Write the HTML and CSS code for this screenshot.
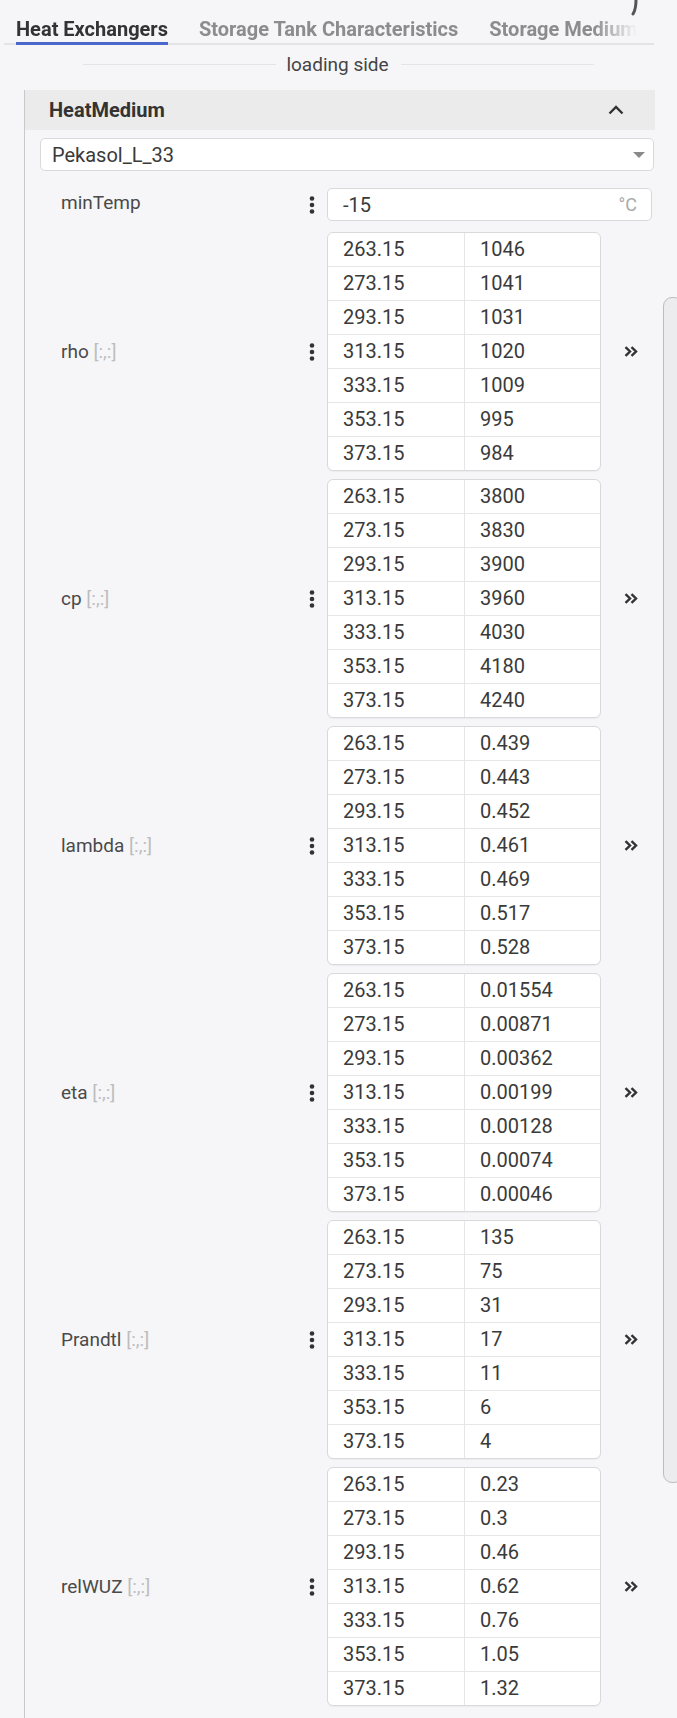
FILE: index.html
```html
<!DOCTYPE html>
<html>
<head>
<meta charset="utf-8">
<link rel="stylesheet" href="styles.css">
</head>
<body>
<svg class="corner-mark" width="8" height="16" viewBox="0 0 8 16"><path d="M5 0 Q5 9 2 14" fill="none" stroke="#555" stroke-width="3" stroke-linecap="round"/></svg>
<div class="tabbar">
  <div class="tab-scroll">
    <div class="tab active">Heat Exchangers</div>
    <div class="tab">Storage Tank Characteristics</div>
    <div class="tab">Storage Medium</div>
  </div>
</div>
<div class="divider"><span class="line"></span><span class="divider-text">loading side</span><span class="line"></span></div>
<div class="panel">
  <div class="panel-header"><span class="panel-title">HeatMedium</span>
    <svg width="16" height="10" viewBox="0 0 16 10"><path d="M1.5 8.5 L8 2 L14.5 8.5" fill="none" stroke="#333" stroke-width="2.4"/></svg>
  </div>
  <div class="select"><span>Pekasol_L_33</span><span class="caret"></span></div>
  <div class="fields">
    <div class="field field-input">
      <div class="field-label">minTemp</div>
      <div class="dots"><svg width="6" height="18" viewBox="0 0 6 18"><circle cx="3" cy="2.5" r="2.3"/><circle cx="3" cy="9" r="2.3"/><circle cx="3" cy="15.5" r="2.3"/></svg></div>
      <div class="input"><span>-15</span><span class="unit">°C</span></div>
    </div>

    <div class="field">
      <div class="field-label">rho <span class="dim">[:,:]</span></div>
      <div class="dots"><svg width="6" height="18" viewBox="0 0 6 18"><circle cx="3" cy="2.5" r="2.3"/><circle cx="3" cy="9" r="2.3"/><circle cx="3" cy="15.5" r="2.3"/></svg></div>
      <div class="table">
        <div class="tr"><div class="td">263.15</div><div class="td">1046</div></div>
        <div class="tr"><div class="td">273.15</div><div class="td">1041</div></div>
        <div class="tr"><div class="td">293.15</div><div class="td">1031</div></div>
        <div class="tr"><div class="td">313.15</div><div class="td">1020</div></div>
        <div class="tr"><div class="td">333.15</div><div class="td">1009</div></div>
        <div class="tr"><div class="td">353.15</div><div class="td">995</div></div>
        <div class="tr"><div class="td">373.15</div><div class="td">984</div></div>
      </div>
      <div class="expand"><svg width="14" height="11" viewBox="0 0 14 11"><path d="M1.5 1.2 L6 5.5 L1.5 9.8 M7.5 1.2 L12 5.5 L7.5 9.8" fill="none" stroke="#333" stroke-width="2.4"/></svg></div>
    </div>

    <div class="field">
      <div class="field-label">cp <span class="dim">[:,:]</span></div>
      <div class="dots"><svg width="6" height="18" viewBox="0 0 6 18"><circle cx="3" cy="2.5" r="2.3"/><circle cx="3" cy="9" r="2.3"/><circle cx="3" cy="15.5" r="2.3"/></svg></div>
      <div class="table">
        <div class="tr"><div class="td">263.15</div><div class="td">3800</div></div>
        <div class="tr"><div class="td">273.15</div><div class="td">3830</div></div>
        <div class="tr"><div class="td">293.15</div><div class="td">3900</div></div>
        <div class="tr"><div class="td">313.15</div><div class="td">3960</div></div>
        <div class="tr"><div class="td">333.15</div><div class="td">4030</div></div>
        <div class="tr"><div class="td">353.15</div><div class="td">4180</div></div>
        <div class="tr"><div class="td">373.15</div><div class="td">4240</div></div>
      </div>
      <div class="expand"><svg width="14" height="11" viewBox="0 0 14 11"><path d="M1.5 1.2 L6 5.5 L1.5 9.8 M7.5 1.2 L12 5.5 L7.5 9.8" fill="none" stroke="#333" stroke-width="2.4"/></svg></div>
    </div>

    <div class="field">
      <div class="field-label">lambda <span class="dim">[:,:]</span></div>
      <div class="dots"><svg width="6" height="18" viewBox="0 0 6 18"><circle cx="3" cy="2.5" r="2.3"/><circle cx="3" cy="9" r="2.3"/><circle cx="3" cy="15.5" r="2.3"/></svg></div>
      <div class="table">
        <div class="tr"><div class="td">263.15</div><div class="td">0.439</div></div>
        <div class="tr"><div class="td">273.15</div><div class="td">0.443</div></div>
        <div class="tr"><div class="td">293.15</div><div class="td">0.452</div></div>
        <div class="tr"><div class="td">313.15</div><div class="td">0.461</div></div>
        <div class="tr"><div class="td">333.15</div><div class="td">0.469</div></div>
        <div class="tr"><div class="td">353.15</div><div class="td">0.517</div></div>
        <div class="tr"><div class="td">373.15</div><div class="td">0.528</div></div>
      </div>
      <div class="expand"><svg width="14" height="11" viewBox="0 0 14 11"><path d="M1.5 1.2 L6 5.5 L1.5 9.8 M7.5 1.2 L12 5.5 L7.5 9.8" fill="none" stroke="#333" stroke-width="2.4"/></svg></div>
    </div>

    <div class="field">
      <div class="field-label">eta <span class="dim">[:,:]</span></div>
      <div class="dots"><svg width="6" height="18" viewBox="0 0 6 18"><circle cx="3" cy="2.5" r="2.3"/><circle cx="3" cy="9" r="2.3"/><circle cx="3" cy="15.5" r="2.3"/></svg></div>
      <div class="table">
        <div class="tr"><div class="td">263.15</div><div class="td">0.01554</div></div>
        <div class="tr"><div class="td">273.15</div><div class="td">0.00871</div></div>
        <div class="tr"><div class="td">293.15</div><div class="td">0.00362</div></div>
        <div class="tr"><div class="td">313.15</div><div class="td">0.00199</div></div>
        <div class="tr"><div class="td">333.15</div><div class="td">0.00128</div></div>
        <div class="tr"><div class="td">353.15</div><div class="td">0.00074</div></div>
        <div class="tr"><div class="td">373.15</div><div class="td">0.00046</div></div>
      </div>
      <div class="expand"><svg width="14" height="11" viewBox="0 0 14 11"><path d="M1.5 1.2 L6 5.5 L1.5 9.8 M7.5 1.2 L12 5.5 L7.5 9.8" fill="none" stroke="#333" stroke-width="2.4"/></svg></div>
    </div>

    <div class="field">
      <div class="field-label">Prandtl <span class="dim">[:,:]</span></div>
      <div class="dots"><svg width="6" height="18" viewBox="0 0 6 18"><circle cx="3" cy="2.5" r="2.3"/><circle cx="3" cy="9" r="2.3"/><circle cx="3" cy="15.5" r="2.3"/></svg></div>
      <div class="table">
        <div class="tr"><div class="td">263.15</div><div class="td">135</div></div>
        <div class="tr"><div class="td">273.15</div><div class="td">75</div></div>
        <div class="tr"><div class="td">293.15</div><div class="td">31</div></div>
        <div class="tr"><div class="td">313.15</div><div class="td">17</div></div>
        <div class="tr"><div class="td">333.15</div><div class="td">11</div></div>
        <div class="tr"><div class="td">353.15</div><div class="td">6</div></div>
        <div class="tr"><div class="td">373.15</div><div class="td">4</div></div>
      </div>
      <div class="expand"><svg width="14" height="11" viewBox="0 0 14 11"><path d="M1.5 1.2 L6 5.5 L1.5 9.8 M7.5 1.2 L12 5.5 L7.5 9.8" fill="none" stroke="#333" stroke-width="2.4"/></svg></div>
    </div>

    <div class="field">
      <div class="field-label">relWUZ <span class="dim">[:,:]</span></div>
      <div class="dots"><svg width="6" height="18" viewBox="0 0 6 18"><circle cx="3" cy="2.5" r="2.3"/><circle cx="3" cy="9" r="2.3"/><circle cx="3" cy="15.5" r="2.3"/></svg></div>
      <div class="table">
        <div class="tr"><div class="td">263.15</div><div class="td">0.23</div></div>
        <div class="tr"><div class="td">273.15</div><div class="td">0.3</div></div>
        <div class="tr"><div class="td">293.15</div><div class="td">0.46</div></div>
        <div class="tr"><div class="td">313.15</div><div class="td">0.62</div></div>
        <div class="tr"><div class="td">333.15</div><div class="td">0.76</div></div>
        <div class="tr"><div class="td">353.15</div><div class="td">1.05</div></div>
        <div class="tr"><div class="td">373.15</div><div class="td">1.32</div></div>
      </div>
      <div class="expand"><svg width="14" height="11" viewBox="0 0 14 11"><path d="M1.5 1.2 L6 5.5 L1.5 9.8 M7.5 1.2 L12 5.5 L7.5 9.8" fill="none" stroke="#333" stroke-width="2.4"/></svg></div>
    </div>
  </div>
</div>
<div class="scrollbar"></div>
</body>
</html>
```

FILE: styles.css
```css
html, body {
  margin: 0;
  padding: 0;
  overflow: hidden;
}
body {
  background: #f6f6f8;
  font-family: Roboto, "Liberation Sans", sans-serif;
  color: #333;
  position: relative;
  height: 1718px;
}
.corner-mark {
  position: absolute;
  left: 631px;
  top: 0;
}
.tabbar {
  margin-left: 4px;
  width: 650px;
  height: 43px;
  border-bottom: 2px solid #e3e3e6;
}
.tab-scroll {
  display: flex;
  height: 45px;
  width: 633px;
  overflow: hidden;
  padding-left: 12px;
  box-sizing: border-box;
  -webkit-mask-image: linear-gradient(to right, #000 590px, transparent 633px);
  mask-image: linear-gradient(to right, #000 590px, transparent 633px);
}
.tab {
  flex: none;
  height: 45px;
  box-sizing: border-box;
  padding-top: 17px;
  line-height: 24px;
  font-size: 20px;
  font-weight: 700;
  color: #8c8c8f;
  margin-right: 31px;
  white-space: nowrap;
}
.tab.active {
  color: #333;
  border-bottom: 3px solid #4a68cc;
}
.divider {
  display: flex;
  align-items: center;
  margin-left: 83px;
  width: 511px;
  height: 38px;
}
.line {
  flex: 1;
  height: 1px;
  background: #e4e4e6;
}
.divider-text {
  font-size: 19px;
  color: #444;
  margin: 0 12px 0 10px;
}
.panel {
  margin-top: 7px;
  margin-left: 24px;
  width: 630px;
  border-left: 1px solid #c9c9cb;
  min-height: 1640px;
}
.panel-header {
  height: 40px;
  background: #ebebeb;
  display: flex;
  align-items: center;
  justify-content: space-between;
  padding: 0 31px 0 24px;
}
.panel-title {
  font-size: 20px;
  font-weight: 700;
  color: #333;
}
.select {
  margin: 8px 1px 0 15px;
  height: 33px;
  box-sizing: border-box;
  border: 1px solid #d9d9db;
  border-radius: 5px;
  background: #fff;
  display: flex;
  align-items: center;
  justify-content: space-between;
  padding: 0 8px 0 11px;
  font-size: 20px;
  color: #3a3a3a;
}
.caret {
  width: 0;
  height: 0;
  border-left: 6px solid transparent;
  border-right: 6px solid transparent;
  border-top: 6px solid #8a8a8a;
}
.fields {
  margin-top: 17px;
}
.field {
  display: flex;
  align-items: center;
  padding-left: 36px;
  margin-bottom: 8px;
}
.field-input {
  margin-bottom: 11px;
}
.field-label {
  width: 244px;
  font-size: 19px;
  color: #4a4a4a;
}
.field-input .field-label {
  margin-top: -4px;
}
.dim {
  color: #bdbdbf;
}
.dots {
  width: 14px;
  display: flex;
  justify-content: center;
}
.dots svg {
  fill: #333;
}
.input {
  margin-left: 8px;
  width: 325px;
  height: 33px;
  box-sizing: border-box;
  border: 1px solid #d9d9db;
  border-radius: 5px;
  background: #fff;
  display: flex;
  align-items: center;
  justify-content: space-between;
  padding: 0 14px 0 15px;
  font-size: 20px;
  color: #3a3a3a;
}
.unit {
  color: #aaa;
  font-size: 18px;
}
.table {
  margin-left: 8px;
  width: 274px;
  box-sizing: border-box;
  border: 1px solid #d9d9db;
  border-radius: 6px;
  background: #fff;
  overflow: hidden;
  box-shadow: 0 1px 1px rgba(0,0,0,0.04);
}
.tr {
  display: grid;
  grid-template-columns: 136px 136px;
  height: 33px;
}
.tr + .tr {
  border-top: 1px solid #e6e6e8;
}
.td {
  padding-left: 15px;
  line-height: 33px;
  font-size: 20px;
  color: #3a3a3a;
}
.td + .td {
  border-left: 1px solid #e6e6e8;
  padding-left: 15px;
}
.expand {
  width: 53px;
  display: flex;
  justify-content: center;
  padding-left: 6px;
  box-sizing: border-box;
}
.scrollbar {
  position: absolute;
  left: 663px;
  top: 297px;
  width: 20px;
  height: 1186px;
  box-sizing: border-box;
  border: 1px solid #bdbdbf;
  border-radius: 9px;
  background: #ececee;
}
```
